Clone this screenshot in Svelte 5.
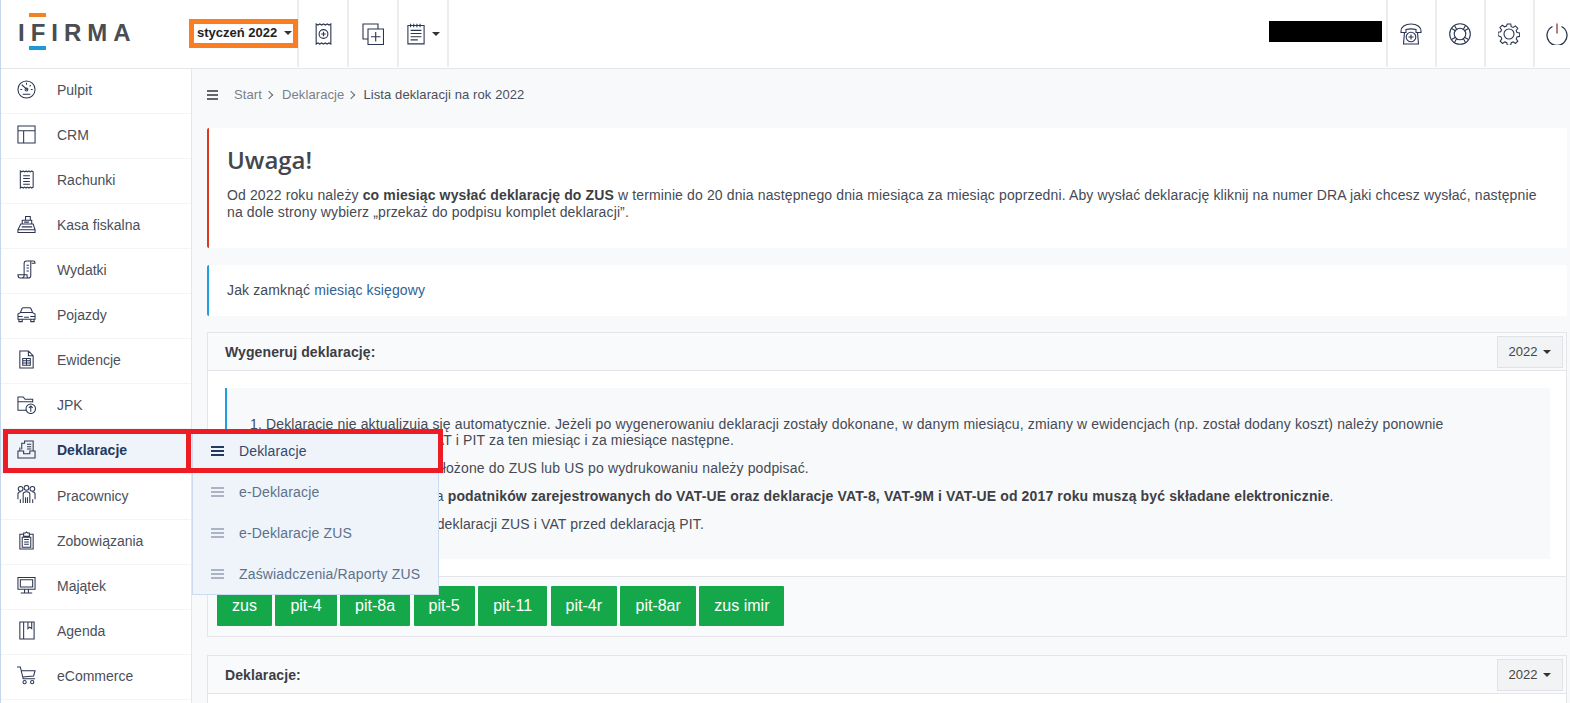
<script lang="ts">
  const menu = [
    { name: "Pulpit", icon: "pulpit" },
    { name: "CRM", icon: "crm" },
    { name: "Rachunki", icon: "rachunki" },
    { name: "Kasa fiskalna", icon: "kasa" },
    { name: "Wydatki", icon: "wydatki" },
    { name: "Pojazdy", icon: "pojazdy" },
    { name: "Ewidencje", icon: "ewidencje" },
    { name: "JPK", icon: "jpk" },
    { name: "Deklaracje", icon: "deklaracje", active: true },
    { name: "Pracownicy", icon: "pracownicy" },
    { name: "Zobowiązania", icon: "zobowiazania" },
    { name: "Majątek", icon: "majatek" },
    { name: "Agenda", icon: "agenda" },
    { name: "eCommerce", icon: "ecommerce" },
  ];

  const submenu = ["Deklaracje", "e-Deklaracje", "e-Deklaracje ZUS", "Zaświadczenia/Raporty ZUS"];
  const forms = ["zus", "pit-4", "pit-8a", "pit-5", "pit-11", "pit-4r", "pit-8ar", "zus imir"];
</script>

{#snippet icon(name: string)}
  <svg class="ico" viewBox="0 0 20 20">
    {#if name === "pulpit"}
      <circle cx="10" cy="10" r="9" />
      <path d="M11 10.500 5 5M3.500 10h2M16.500 10h-2M6 15h8M10 3v2M14.500 5.500l-1.300 1.300" />
      <circle cx="10" cy="10" r="1.500" />
    {:else if name === "crm"}
      <path d="M1 1h18v18H1zM1 6h18M7 6v13" />
    {:else if name === "rachunki"}
      <path d="M3.500 1l1.500 1 1.500-1 1.500 1 1.500-1 1.500 1 1.500-1 1.500 1 1.500-1 1.500 1v16l-1.500 1-1.500-1-1.500 1-1.500-1-1.500 1-1.500-1-1.500 1-1.500-1-1.500 1zM6.500 6h7M6.500 9h7M6.500 12h7M6.500 15h7" />
    {:else if name === "kasa"}
      <path d="M9 1.500h5v4H9zM5.500 5.500h10v4h-10zM4 9.500h13l2 6H1zM1 15.500h18v3H1zM7.500 7.500h5M5 12.500h11" />
    {:else if name === "wydatki"}
      <path d="M5 19c1.500 0 2.500-1 2.500-3V3.500C7.500 2 8.500 1 10 1h7.500c1 0 1.500 1 1.500 2.500h-3.500M14.500 1.500V16c0 2-1 3-2.500 3H3.500C2 19 1 18 1 15.500h9.500c0 2 .5 3.500 1.500 3.500M10 5.500h2.500M10 8.500h2.500M10 11.500h2.500" />
    {:else if name === "pojazdy"}
      <path d="M1 9.500 3.500 8l1.700-4c.3-.7.800-1 1.500-1h6.600c.7 0 1.200.3 1.500 1l1.700 4L19 9.500V15H1zM3.500 8h13M1 12h5M14 12h5M7.500 13h5M2 15v2.500h3.500V15M14.500 15v2.500H18V15" />
    {:else if name === "ewidencje"}
      <path d="M3 1h9l5 5v13H3zM12 1v5h5M6 9h8v7H6zM6 11.300h8M6 13.600h8M10 9v7" />
    {:else if name === "jpk"}
      <path d="M9.500 16H1V2h5.500l2 2.500h8V8M1 7h15.500" />
      <circle cx="14.500" cy="14.500" r="5" />
      <path d="M14.500 17.500v-6M12.500 13.500l2-2 2 2" />
    {:else if name === "deklaracje"}
      <path d="M5 10V3.500h3V1h9v11M10.500 4.500h4.500M10.500 7h4.500M10.500 9.500h4.500M3 8v3.500M1 11.500h6v3h6.500v-3H19V19H1z" />
    {:else if name === "pracownicy"}
      <circle cx="3.800" cy="4" r="2.500" />
      <circle cx="10" cy="3" r="2.500" />
      <circle cx="16.200" cy="4" r="2.500" />
      <path d="M1 15V9.500c0-1.500 1.300-2.500 3-2.500M19 15V9.500c0-1.500-1.300-2.500-3-2.500M6.500 19V9.500c0-1.500 1.500-2.500 3.500-2.500s3.500 1 3.500 2.500V19M3.500 15v4M16.500 15v4M9 13v6M11 13v6" />
    {:else if name === "zobowiazania"}
      <path d="M7 3.500H3V19h14V3.500h-4M7 3.500V2h2l1-1 1 1h2v3.500H7zM5.500 6.500h9V17h-9zM7.500 9h5M7.500 11.500h5M7.500 14h5" />
    {:else if name === "majatek"}
      <path d="M1 1.500h18V14H1zM3.500 4h13v7.500h-13zM8 14v3.500M12 14v3.500M4 18h12" />
    {:else if name === "agenda"}
      <path d="M3 1h15v18H3zM7 1v18M11.500 1v7l2-1.500 2 1.500V1" />
    {:else if name === "ecommerce"}
      <path d="M0 1h3.500l3 12.500H19M4.500 5H19l-1.500 5.500L6 11.500" />
      <circle cx="8" cy="17" r="1.700" />
      <circle cx="16" cy="17" r="1.700" />
    {/if}
  </svg>
{/snippet}

{#snippet bars()}
  <span class="bars"><i></i><i></i><i></i></span>
{/snippet}

<div class="page">
  <header class="top">
    <div class="logo">
      <span class="logo-i">I<b class="o"></b>F<b class="b"></b></span>IRMA
    </div>
    <div class="month">styczeń 2022 <span class="caret"></span></div>
    <button class="tool" aria-label="Nowy rachunek">
      <svg class="ico big" viewBox="0 0 18 24">
        <path d="M1 1l2 1.200L5 1l2 1.200L9 1l2 1.200L13 1l2 1.200L17 1v22l-2-1.200-2 1.200-2-1.200L9 23l-2-1.200L5 23l-2-1.200L1 23z" />
        <circle cx="9" cy="12" r="4.800" />
        <path d="M9 9.500v5M6.500 12h5" />
      </svg>
    </button>
    <button class="tool" aria-label="Nowy dokument">
      <svg class="ico big wide" viewBox="0 0 22 22">
        <path d="M6 16H1V1h15v5" />
        <path d="M6 6h15.500v15.500H6zM13.700 9v9.500M9 13.700h9.500" />
      </svg>
    </button>
    <button class="tool drop" aria-label="Lista">
      <svg class="ico big note-ico" viewBox="0 0 20 24">
        <path d="M1 2.500h18V23H1zM4 .5v4M7.500 .5v4M11 .5v4M14.500 .5v4M4 8h12M4 11.500h12M4 15h12M4 18.500h8" />
      </svg>
      <span class="caret"></span>
    </button>
    <div class="spacer"></div>
    <div class="redacted"></div>
    <button class="tool right" aria-label="Telefon">
      <svg class="ico big wide" viewBox="0 0 22 22">
        <path d="M1 8c0-4 4-7 10-7s10 3 10 7v1.500h-5V6.500c-3-.8-7-.8-10 0v3H1zM4.500 9.500 3.500 21h15L17.500 9.500" />
        <circle cx="11" cy="14" r="4.800" />
        <path d="M11 11.500v5M8.500 14h5" />
      </svg>
    </button>
    <button class="tool right" aria-label="Pomoc">
      <svg class="ico big wide" viewBox="0 0 22 22">
        <circle cx="11" cy="11" r="10.300" />
        <circle cx="11" cy="11" r="5.800" />
        <path d="M2.500 5.500 7 8M5.500 2.500 8 7M19.500 5.500 15 8M16.500 2.500 14 7M2.500 16.500 7 14M5.500 19.500 8 15M19.500 16.500 15 14M16.500 19.500 14 15" />
      </svg>
    </button>
    <button class="tool right" aria-label="Ustawienia">
      <svg class="ico big wide" viewBox="0 0 22 22">
        <path d="M9.300 1h3.400l.5 2.700 2 .8 2.200-1.600 2.400 2.400-1.600 2.200.8 2 2.700.5v3.400l-2.700.5-.8 2 1.600 2.200-2.400 2.400-2.200-1.600-2 .8-.5 2.700H9.300l-.5-2.700-2-.8-2.200 1.600-2.400-2.400 1.600-2.200-.8-2L0 12.700V9.300l2.700-.5.800-2-1.600-2.200 2.400-2.400 2.200 1.600 2-.8z" />
        <circle cx="11" cy="11" r="5" />
      </svg>
    </button>
    <button class="tool right last" aria-label="Wyloguj">
      <svg class="ico big power" viewBox="0 0 22 22">
        <path d="M6.500 3.500a10 10 0 1 0 9 0" />
        <path class="red" d="M11 .5v10" />
      </svg>
    </button>
  </header>

  <div class="layout">
    <nav class="side">
      {#each menu as m}
        <a class="item" class:active={m.active} href="#top">
          {@render icon(m.icon)}
          <span>{m.name}</span>
        </a>
      {/each}
    </nav>

    <main class="content">
      <div class="crumbs">
        {@render bars()}
        <span class="crumb">Start</span><span class="chev"></span>
        <span class="crumb">Deklaracje</span><span class="chev"></span>
        <span class="crumb now">Lista deklaracji na rok 2022</span>
      </div>

      <section class="note warn">
        <h1>Uwaga!</h1>
        <p>Od 2022 roku należy <b>co miesiąc wysłać deklarację do ZUS</b> w terminie do 20 dnia następnego dnia miesiąca za miesiąc poprzedni. Aby wysłać deklarację kliknij na numer DRA jaki chcesz wysłać, następnie na dole strony wybierz „przekaż do podpisu komplet deklaracji”.</p>
      </section>

      <section class="note info">
        Jak zamknąć <a href="#top">miesiąc księgowy</a>
      </section>

      <section class="card">
        <div class="card-head">
          <strong>Wygeneruj deklarację:</strong>
          <span class="year">2022 <span class="caret"></span></span>
        </div>
        <div class="card-body">
          <div class="hints">
            <p>1. Deklaracje nie aktualizują się automatycznie. Jeżeli po wygenerowaniu deklaracji zostały dokonane, w danym miesiącu, zmiany w ewidencjach (np. został dodany koszt) należy ponownie wygenerować te deklaracje VAT i PIT za ten miesiąc i za miesiące następne.</p>
            <p>2. Deklaracje, które zostaną&nbsp;&nbsp;złożone do ZUS lub US po wydrukowaniu należy podpisać.</p>
            <p>3. Deklaracje PIT-5 i VAT-7 dla <b>podatników zarejestrowanych do VAT-UE oraz deklaracje VAT-8, VAT-9M i VAT-UE od 2017 roku muszą być składane elektronicznie</b>.</p>
            <p>4. Prosimy o wygenerowanie deklaracji ZUS i VAT przed deklaracją PIT.</p>
          </div>
        </div>
        <div class="card-foot">
          {#each forms as f}
            <button class="green">{f}</button>
          {/each}
        </div>
      </section>

      <section class="card second">
        <div class="card-head">
          <strong>Deklaracje:</strong>
          <span class="year">2022 <span class="caret"></span></span>
        </div>
      </section>
    </main>
  </div>

  <ul class="flyout">
    {#each submenu as s, i}
      <li class:current={i === 0}>{@render bars()}{s}</li>
    {/each}
  </ul>

  <div class="mark orange"></div>
  <div class="mark red-a"></div>
  <div class="mark red-b"></div>
</div>

<style>
  :global(body) {
    margin: 0;
    background: #f8f9fb;
    overflow: hidden;
  }

  .page {
    position: relative;
    height: 703px;
    overflow: hidden;
    border-left: 1px solid #c5d5ea;
    font-family: "Liberation Sans", Arial, sans-serif;
    font-size: 14px;
    color: #454a54;
    box-sizing: border-box;
  }

  .top {
    display: flex;
    height: 68px;
    background: #fff;
    border-bottom: 1px solid #e4e6e9;
    box-sizing: content-box;
  }

  .logo {
    width: 187px;
    flex-shrink: 0;
    padding: 21px 0 0 17px;
    box-sizing: border-box;
    font: 700 24px "Liberation Sans", Arial, sans-serif;
    letter-spacing: 6px;
    line-height: 24px;
    color: #4a4d52;
  }

  .logo-i {
    position: relative;
    display: inline-block;
  }

  .logo-i b {
    position: absolute;
    left: 11px;
    width: 17px;
    height: 4px;
  }

  .logo-i .o {
    top: -8px;
    background: #f58220;
  }

  .logo-i .b {
    top: 25px;
    background: #1d9ad6;
  }

  .month {
    width: 111px;
    flex-shrink: 0;
    font-weight: 700;
    font-size: 13px;
    color: #222;
    padding-top: 25px;
    padding-left: 9px;
    box-sizing: border-box;
    white-space: nowrap;
    height: 67px;
    border-right: 2px solid #eceded;
  }

  .caret {
    display: inline-block;
    vertical-align: 2px;
    margin-left: 3px;
    border-top: 4px solid #333;
    border-left: 4px solid transparent;
    border-right: 4px solid transparent;
  }

  .tool {
    width: 50px;
    height: 67px;
    padding: 0;
    flex-shrink: 0;
    border: 0;
    border-right: 2px solid #eceded;
    background: #fff;
    display: flex;
    align-items: center;
    justify-content: center;
  }

  .tool.drop {
    gap: 7px;
  }

  .tool.drop .caret {
    margin: 0;
    vertical-align: 0;
  }

  .tool.right {
    width: 49px;
    padding-right: 2px;
    border-right: 0;
    border-left: 2px solid #eceded;
  }

  .tool.last {
    width: 37px;
    justify-content: flex-start;
    padding: 0 0 0 11px;
    box-sizing: border-box;
  }

  .spacer {
    flex: 1;
  }

  .redacted {
    width: 113px;
    height: 21px;
    background: #000;
    margin: 21px 4px 0 0;
  }

  .ico {
    width: 20px;
    height: 20px;
    fill: none;
    stroke: #2b3550;
    stroke-width: 1.100;
    flex-shrink: 0;
  }

  .ico.big {
    width: 17px;
    height: 22px;
    stroke-width: 1.200;
  }

  .ico.note-ico {
    width: 18px;
  }

  .ico.wide {
    width: 22px;
    height: 22px;
    stroke-width: 1.100;
  }

  .ico.power {
    width: 22px;
    height: 22px;
    stroke-width: 1.300;
  }

  .ico .red {
    stroke: #8c3a3a;
  }

  .layout {
    display: flex;
  }

  .side {
    width: 190px;
    flex-shrink: 0;
    background: #fff;
    border-right: 1px solid #e4e6e9;
    height: 640px;
  }

  .item {
    display: flex;
    align-items: center;
    gap: 21px;
    height: 45px;
    padding: 0 0 2px 16px;
    box-sizing: border-box;
    border-bottom: 1px solid #f3f4f6;
    color: #4a4f5a;
    text-decoration: none;
  }

  .item:nth-child(10) {
    height: 46px;
  }

  .item.active {
    background: #eff4fb;
    color: #23395d;
    font-weight: 700;
  }

  .item .ico {
    width: 19px;
    height: 19px;
    transform: translateY(-1px);
  }

  .content {
    flex: 1;
    min-width: 0;
    padding: 0 3px 0 15px;
  }

  .crumbs {
    display: flex;
    align-items: center;
    height: 51px;
    font-size: 13px;
    letter-spacing: 0.100px;
    color: #7b7f88;
  }

  .crumbs .bars {
    width: 11px;
    margin-right: 16px;
  }

  .crumbs .bars i {
    background: #666;
  }

  .crumb.now {
    color: #4b4f57;
    margin-left: -1px;
  }

  .chev {
    width: 5px;
    height: 5px;
    margin: 1px 10px 0 4px;
    border-top: 1px solid #666;
    border-right: 1px solid #666;
    transform: rotate(45deg);
  }

  .bars {
    display: inline-flex;
    flex-direction: column;
    gap: 2px;
    width: 12px;
  }

  .bars i {
    display: block;
    height: 2px;
    background: #aab4c4;
  }

  .note {
    background: #fff;
    border-radius: 2px;
    box-sizing: border-box;
  }

  .warn {
    height: 120px;
    margin-top: 8px;
    border-left: 2px solid #d9391c;
    padding: 16px 18px 0 18px;
  }

  .warn h1 {
    margin: 0;
    font: 600 24px/31px "Open Sans", sans-serif;
    color: #43464d;
  }

  .warn p {
    margin: 12px 0 0;
    line-height: 17px;
    font-size: 14px;
    letter-spacing: 0.130px;
  }

  .warn b {
    color: #3d3f45;
  }

  .info {
    height: 51px;
    margin-top: 17px;
    border-left: 2px solid #1f9fe0;
    padding: 17px 18px 0;
    font-size: 14px;
    letter-spacing: 0.130px;
  }

  .info a {
    color: #2f6296;
    text-decoration: none;
  }

  .card {
    margin-top: 16px;
    background: #fff;
    border: 1px solid #e3e5e8;
    height: 305px;
    box-sizing: border-box;
    display: flex;
    flex-direction: column;
  }

  .card-head {
    display: flex;
    align-items: center;
    justify-content: space-between;
    height: 37px;
    flex-shrink: 0;
    padding: 0 3px 0 17px;
    background: #f9fafc;
    border-bottom: 1px solid #e3e5e8;
    color: #3b3e45;
    font-size: 14px;
    letter-spacing: 0.100px;
  }

  .year {
    width: 66px;
    height: 32px;
    display: flex;
    align-items: center;
    justify-content: center;
    gap: 4px;
    font-size: 13px;
    letter-spacing: 0;
    color: #444;
    background: #f2f3f5;
    border: 1px solid #e0e2e5;
    box-sizing: border-box;
  }

  .year .caret {
    margin: 0 0 0 2px;
    vertical-align: 0;
  }

  .card-body {
    flex: 1;
    padding: 17px 16px 17px 17px;
    border-bottom: 1px solid #e3e5e8;
    min-height: 0;
  }

  .hints {
    height: 100%;
    box-sizing: border-box;
    background: #f8f9fb;
    border-left: 2px solid #1f9fe0;
    padding: 28px 60px 0 23px;
    font-size: 14px;
    letter-spacing: 0.140px;
    line-height: 16px;
  }

  .hints p {
    margin: 0 0 12px;
  }

  .hints b {
    color: #3d3f45;
  }

  .card-foot {
    display: flex;
    gap: 3.500px;
    height: 59px;
    flex-shrink: 0;
    padding: 9px 9px 0;
    box-sizing: border-box;
    background: #f9fafc;
  }

  .green {
    height: 40px;
    padding: 0 15px;
    border: 0;
    border-radius: 1px;
    background: #15a84a;
    color: #fff;
    font: 16px "Liberation Sans", Arial, sans-serif;
  }

  .second {
    margin-top: 18px;
    height: 200px;
  }

  .flyout {
    position: absolute;
    left: 191px;
    top: 429px;
    width: 247px;
    height: 166px;
    margin: 0;
    padding: 0;
    list-style: none;
    box-sizing: border-box;
    background: #eff4fb;
    border: 1px solid #cadcee;
    border-top: 0;
    font-size: 14px;
    letter-spacing: 0.150px;
    color: #5d7189;
  }

  .flyout li {
    display: flex;
    align-items: center;
    gap: 15px;
    height: 41px;
    padding-left: 18px;
    box-sizing: border-box;
  }

  .flyout li .bars {
    width: 13px;
  }

  .flyout .current {
    color: #33496b;
    height: 42px;
    padding-top: 2px;
  }

  .flyout .current .bars i {
    background: #23395d;
  }

  .mark {
    position: absolute;
    box-sizing: border-box;
    pointer-events: none;
  }

  .orange {
    left: 188px;
    top: 19px;
    width: 109px;
    height: 29px;
    border: 5px solid #fb7d22;
  }

  .red-a {
    left: 2px;
    top: 429px;
    width: 188px;
    height: 44px;
    border: 5px solid #ed1c24;
  }

  .red-b {
    left: 185px;
    top: 429px;
    width: 257px;
    height: 44px;
    border: 5px solid #ed1c24;
  }
</style>
